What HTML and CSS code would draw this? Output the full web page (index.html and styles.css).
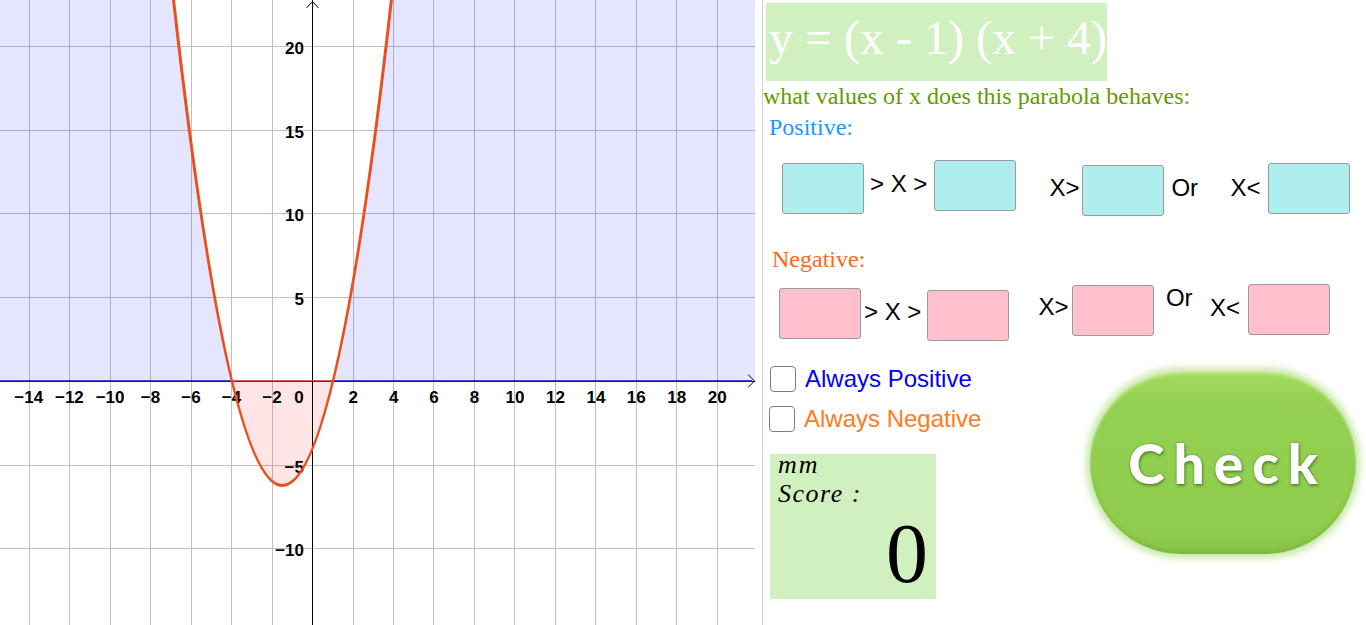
FILE: index.html
```html
<!DOCTYPE html>
<html lang="en">
<head>
<meta charset="utf-8">
<title>Parabola sign</title>
<link rel="stylesheet" href="styles.css">
</head>
<body>
<div class="app">
  <div class="graph">
    <svg class="plot" width="755" height="625" viewBox="0 0 755 625" xmlns="http://www.w3.org/2000/svg">
      <defs>
        <clipPath id="above"><rect x="0" y="0" width="755" height="381"/></clipPath>
        <clipPath id="below"><rect x="0" y="381" width="755" height="244"/></clipPath>
      </defs>
      <g class="grid">
        <line x1="29.5" y1="0" x2="29.5" y2="625"/>
        <line x1="69.5" y1="0" x2="69.5" y2="625"/>
        <line x1="110.5" y1="0" x2="110.5" y2="625"/>
        <line x1="150.5" y1="0" x2="150.5" y2="625"/>
        <line x1="191.5" y1="0" x2="191.5" y2="625"/>
        <line x1="231.5" y1="0" x2="231.5" y2="625"/>
        <line x1="272.5" y1="0" x2="272.5" y2="625"/>
        <line x1="353.5" y1="0" x2="353.5" y2="625"/>
        <line x1="393.5" y1="0" x2="393.5" y2="625"/>
        <line x1="433.5" y1="0" x2="433.5" y2="625"/>
        <line x1="474.5" y1="0" x2="474.5" y2="625"/>
        <line x1="514.5" y1="0" x2="514.5" y2="625"/>
        <line x1="555.5" y1="0" x2="555.5" y2="625"/>
        <line x1="595.5" y1="0" x2="595.5" y2="625"/>
        <line x1="636.5" y1="0" x2="636.5" y2="625"/>
        <line x1="676.5" y1="0" x2="676.5" y2="625"/>
        <line x1="717.5" y1="0" x2="717.5" y2="625"/>
        <line x1="0" y1="46.5" x2="755" y2="46.5"/>
        <line x1="0" y1="130.5" x2="755" y2="130.5"/>
        <line x1="0" y1="213.5" x2="755" y2="213.5"/>
        <line x1="0" y1="297.5" x2="755" y2="297.5"/>
        <line x1="0" y1="465.5" x2="755" y2="465.5"/>
        <line x1="0" y1="548.5" x2="755" y2="548.5"/>
      </g>
      <path class="fill-pos" clip-path="url(#above)" fill-rule="evenodd" d="M0,0 H755 V381 H0 Z M171.26,-20.64 Q282.47,991.83 393.68,-20.64 Z"/>
      <path class="fill-neg" clip-path="url(#below)" d="M171.26,-20.64 Q282.47,991.83 393.68,-20.64 Z"/>
      <g class="axis">
        <line x1="312.5" y1="0" x2="312.5" y2="625"/>
        <line x1="0" y1="381.5" x2="755" y2="381.5"/>
        <polyline points="306.5,8 312.5,1.5 318.5,8"/>
        <polyline points="748,374.5 754.5,381 748,387.5"/>
      </g>
      <line class="edge-pos" x1="0" y1="381" x2="231.9" y2="381"/>
      <line class="edge-pos" x1="333" y1="381" x2="752" y2="381"/>
      <line class="edge-neg" x1="231.9" y1="381" x2="333" y2="381"/>
      <g class="xlabels">
        <text x="28.7" y="403">−14</text>
        <text x="69.4" y="403">−12</text>
        <text x="110.1" y="403">−10</text>
        <text x="150.5" y="403">−8</text>
        <text x="191" y="403">−6</text>
        <text x="231.4" y="403">−4</text>
        <text x="271.9" y="403">−2</text>
        <text x="299" y="403">0</text>
        <text x="353.2" y="403">2</text>
        <text x="393.7" y="403">4</text>
        <text x="434.1" y="403">6</text>
        <text x="474.6" y="403">8</text>
        <text x="515" y="403">10</text>
        <text x="555.4" y="403">12</text>
        <text x="595.9" y="403">14</text>
        <text x="636.3" y="403">16</text>
        <text x="676.8" y="403">18</text>
        <text x="717.2" y="403">20</text>
      </g>
      <g class="ylabels">
        <text x="304" y="53.5">20</text>
        <text x="304" y="137.5">15</text>
        <text x="304" y="220.5">10</text>
        <text x="304" y="304.5">5</text>
        <text x="304" y="472.5">−5</text>
        <text x="304" y="555.5">−10</text>
      </g>
      <path class="curve" d="M171.26,-20.64 Q282.47,991.83 393.68,-20.64"/>
    </svg>
  </div>
  <div class="divider"></div>
  <div class="panel">
    <div class="title">y = (x - 1) (x + 4)</div>
    <div class="question">what values of x does this parabola behaves:</div>
    <div class="heading heading-pos">Positive:</div>
    <div class="row row-pos">
      <div class="box cyan i1"></div>
      <div class="op i2">&gt; X &gt;</div>
      <div class="box cyan i3"></div>
      <div class="op i4">X&gt;</div>
      <div class="box cyan i5"></div>
      <div class="op i6">Or</div>
      <div class="op i7">X&lt;</div>
      <div class="box cyan i8"></div>
    </div>
    <div class="heading heading-neg">Negative:</div>
    <div class="row row-neg">
      <div class="box pink i1"></div>
      <div class="op i2">&gt; X &gt;</div>
      <div class="box pink i3"></div>
      <div class="op i4">X&gt;</div>
      <div class="box pink i5"></div>
      <div class="op i6">Or</div>
      <div class="op i7">X&lt;</div>
      <div class="box pink i8"></div>
    </div>
    <div class="bottom">
      <div class="left-col">
        <div class="cb-row cb-row-1"><span class="cb"></span><span class="cb-text cb-pos">Always Positive</span></div>
        <div class="cb-row cb-row-2"><span class="cb"></span><span class="cb-text cb-neg">Always Negative</span></div>
        <div class="score">
          <div class="score-mm">mm</div>
          <div class="score-label">Score :</div>
          <div class="score-value">0</div>
        </div>
      </div>
      <div class="check"><span class="check-text">Check</span></div>
    </div>
  </div>
</div>
</body>
</html>
```

FILE: styles.css
```css
* { box-sizing: border-box; }
html, body {
  margin: 0;
  padding: 0;
  background: #ffffff;
}
body {
  width: 1366px;
  height: 625px;
  overflow: hidden;
  font-family: "Liberation Sans", Arial, sans-serif;
}
.app {
  display: flex;
  width: 1366px;
  height: 625px;
}
.graph {
  width: 755px;
  height: 625px;
  flex: none;
}
.plot { display: block; }
.grid line {
  stroke: #c0c0c0;
  stroke-width: 1;
}
.fill-pos {
  fill: #0000ff;
  fill-opacity: 0.1;
}
.fill-neg {
  fill: #ff0000;
  fill-opacity: 0.1;
}
.axis line, .axis polyline {
  stroke: #000000;
  stroke-width: 1;
  fill: none;
}
.edge-pos {
  stroke: #1414c8;
  stroke-width: 1.6;
}
.edge-neg {
  stroke: #d42020;
  stroke-width: 1.6;
}
.xlabels text, .ylabels text {
  font-family: "Liberation Sans", Arial, sans-serif;
  font-weight: bold;
  font-size: 17px;
  fill: #000000;
}
.xlabels text { text-anchor: middle; }
.ylabels text { text-anchor: end; }
.curve {
  fill: none;
  stroke: #e8501e;
  stroke-width: 3;
}
.divider {
  width: 8px;
  flex: none;
  border-right: 1px solid #d4d4d4;
}
.panel {
  flex: 1;
  display: flex;
  flex-direction: column;
  align-items: flex-start;
}
.title {
  margin: 3px 0 0 3px;
  width: 341px;
  height: 78px;
  padding-left: 3px;
  background: #d0f0c0;
  color: #ffffff;
  font-family: "Liberation Serif", "Times New Roman", serif;
  font-size: 48px;
  line-height: 70px;
  white-space: nowrap;
  overflow: hidden;
}
.question {
  margin-top: 1px;
  font-family: "Liberation Serif", "Times New Roman", serif;
  font-size: 24px;
  line-height: 28px;
  color: #669900;
  white-space: nowrap;
}
.heading {
  font-family: "Liberation Serif", "Times New Roman", serif;
  font-size: 24px;
  line-height: 28px;
  white-space: nowrap;
}
.heading-pos {
  margin: 3px 0 0 6px;
  color: #1e96ff;
}
.heading-neg {
  margin: 29px 0 0 9px;
  color: #ff661a;
}
.row {
  display: flex;
  align-items: flex-start;
}
.row-pos { margin-top: 19px; }
.row-neg { margin-top: 11px; }
.box {
  width: 82px;
  height: 51px;
  border: 1px solid #9a9a9a;
  border-radius: 3px;
  flex: none;
}
.cyan { background: #afeeee; }
.pink { background: #ffc0cb; }
.op {
  font-family: "Liberation Sans", Arial, sans-serif;
  font-size: 24px;
  line-height: 28px;
  color: #000000;
  white-space: pre;
  flex: none;
}
.row-pos .i1 { margin: 3px 0 0 19px; }
.row-pos .i2 { margin: 10px 0 0 6px; }
.row-pos .i3 { margin: 0 0 0 7px; }
.row-pos .i4 { margin: 14px 0 0 33px; }
.row-pos .i5 { margin: 5px 0 0 3px; }
.row-pos .i6 { margin: 14px 0 0 7px; }
.row-pos .i7 { margin: 14px 0 0 32.5px; }
.row-pos .i8 { margin: 3px 0 0 7.5px; }

.row-neg .i1 { margin: 4px 0 0 16px; }
.row-neg .i2 { margin: 14px 0 0 3px; }
.row-neg .i3 { margin: 6px 0 0 5.5px; }
.row-neg .i4 { margin: 9px 0 0 29.5px; }
.row-neg .i5 { margin: 1px 0 0 4px; }
.row-neg .i6 { margin: 0 0 0 11.5px; }
.row-neg .i7 { margin: 10px 0 0 17.5px; }
.row-neg .i8 { margin: 0 0 0 8px; }

.bottom {
  display: flex;
  align-items: flex-start;
}
.left-col {
  width: 327px;
  display: flex;
  flex-direction: column;
  align-items: flex-start;
}
.cb-row {
  display: flex;
  align-items: center;
  height: 26px;
  margin-left: 7px;
}
.cb-row-1 { margin-top: 25px; }
.cb-row-2 { margin-top: 14px; margin-left: 6px; }
.cb {
  width: 26px;
  height: 26px;
  border: 1.5px solid #7c7c7c;
  border-radius: 4px;
  background: #ffffff;
  flex: none;
}
.cb-text {
  margin-left: 9px;
  font-family: "Liberation Sans", Arial, sans-serif;
  font-size: 24px;
  line-height: 26px;
  white-space: nowrap;
}
.cb-pos { color: #0000ff; }
.cb-neg { color: #ff7b1c; }
.score {
  margin: 22px 0 0 7px;
  width: 166px;
  height: 145px;
  background: #d0f0c0;
  padding: 0 8px 0 8px;
  font-family: "Liberation Serif", "Times New Roman", serif;
  color: #000000;
}
.score-mm {
  font-style: italic;
  font-size: 26px;
  line-height: 22px;
  letter-spacing: 2px;
}
.score-label {
  font-style: italic;
  font-size: 26px;
  line-height: 36px;
  letter-spacing: 1.5px;
  white-space: pre;
}
.score-value {
  margin-top: 2px;
  font-size: 84px;
  line-height: 80px;
  text-align: right;
}
.check {
  margin-top: 31px;
  width: 266px;
  height: 182px;
  border-radius: 91px;
  background: linear-gradient(#a3da60 0%, #94d052 18%, #90cd4e 85%, #88c446 100%);
  box-shadow: 0 0 7px 4px rgba(150, 212, 90, 0.55), inset 0 2px 3px rgba(210, 245, 170, 0.7), inset 0 -2px 4px rgba(90, 150, 40, 0.35);
  display: flex;
  align-items: center;
  justify-content: center;
  flex: none;
}
.check-text {
  font-family: "Lato", "DejaVu Sans", sans-serif;
  font-weight: 900;
  font-size: 55px;
  letter-spacing: 9px;
  margin-left: 9px;
  color: #ffffff;
  text-shadow: 0 0 2px rgba(70, 120, 25, 0.9), 1px 2px 3px rgba(50, 95, 15, 0.55);
}
```
